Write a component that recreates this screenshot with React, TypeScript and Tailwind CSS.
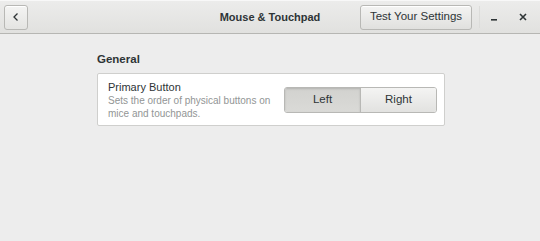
import React from "react";

export default function App() {
  return (
    <div className="w-[540px] h-[241px] bg-[#ededed] flex flex-col overflow-hidden" style={{ fontFamily: '"Liberation Sans", Arial, sans-serif' }}>
      <div className="h-[34px] shrink-0 flex items-center pl-[4px] pr-[2px] bg-gradient-to-b from-[#ececeb] to-[#e1e1df] border-b border-[#b6b6b3] border-t border-t-[#f8f8f8] relative">
        <button className="w-[24px] h-[25px] rounded-[3px] border border-[#b8b8b5] bg-gradient-to-b from-[#f4f4f3] to-[#e4e4e2] flex items-center justify-center shadow-[inset_0_1px_0_#fff]">
          <svg width="10" height="10" viewBox="0 0 10 10"><path d="M6.5 1.5 L3 5 L6.5 8.5" stroke="#2e3436" strokeWidth="1.3" fill="none" /></svg>
        </button>
        <span className="absolute left-1/2 top-1/2 -translate-x-1/2 -translate-y-1/2 text-[11px] font-bold text-[#2e3436]">Mouse &amp; Touchpad</span>
        <div className="flex-1" />
        <button className="w-[112px] h-[25px] rounded-[3px] border border-[#b8b8b5] bg-gradient-to-b from-[#f4f4f3] to-[#e0e0de] text-[11.5px] text-[#2e3436] shadow-[inset_0_1px_0_#fff]">Test Your Settings</button>
        <div className="w-px h-[22px] bg-[#dcdcda] ml-[7px]" />
        <div className="w-[28px] flex justify-center items-center text-[#2e3436]">
          <svg width="8" height="8" viewBox="0 0 8 8"><rect x="1" y="6" width="6" height="1.6" fill="#2e3436" /></svg>
        </div>
        <div className="w-[30px] flex justify-center items-center">
          <svg width="8" height="8" viewBox="0 0 8 8"><path d="M1 1 L7 7 M7 1 L1 7" stroke="#2e3436" strokeWidth="1.6" /></svg>
        </div>
      </div>
      <div className="pl-[97px] pt-[18px]">
        <div className="text-[11.5px] font-bold text-[#2e3436] leading-[14px]">General</div>
        <div className="mt-[7px] w-[348px] h-[53px] bg-white border border-[#cfcfcd] rounded-[2px] flex items-center pl-[10px] pr-[7px]">
          <div className="flex-1">
            <div className="text-[11px] text-[#2e3436] leading-[14px]">Primary Button</div>
            <div className="text-[10px] text-[#929595] leading-[13px]">Sets the order of physical buttons on<br />mice and touchpads.</div>
          </div>
          <div className="flex h-[26px] rounded-[3px] border border-[#b8b8b5] overflow-hidden">
            <div className="w-[76px] flex items-center justify-center bg-gradient-to-b from-[#d2d2cf] to-[#dadad7] text-[11.5px] text-[#2e3436] shadow-[inset_0_1px_2px_rgba(0,0,0,0.15)] border-r border-[#b8b8b5]">Left</div>
            <div className="w-[75px] flex items-center justify-center bg-gradient-to-b from-[#f4f4f3] to-[#e2e2e0] text-[11.5px] text-[#2e3436]">Right</div>
          </div>
        </div>
      </div>
    </div>
  );
}
